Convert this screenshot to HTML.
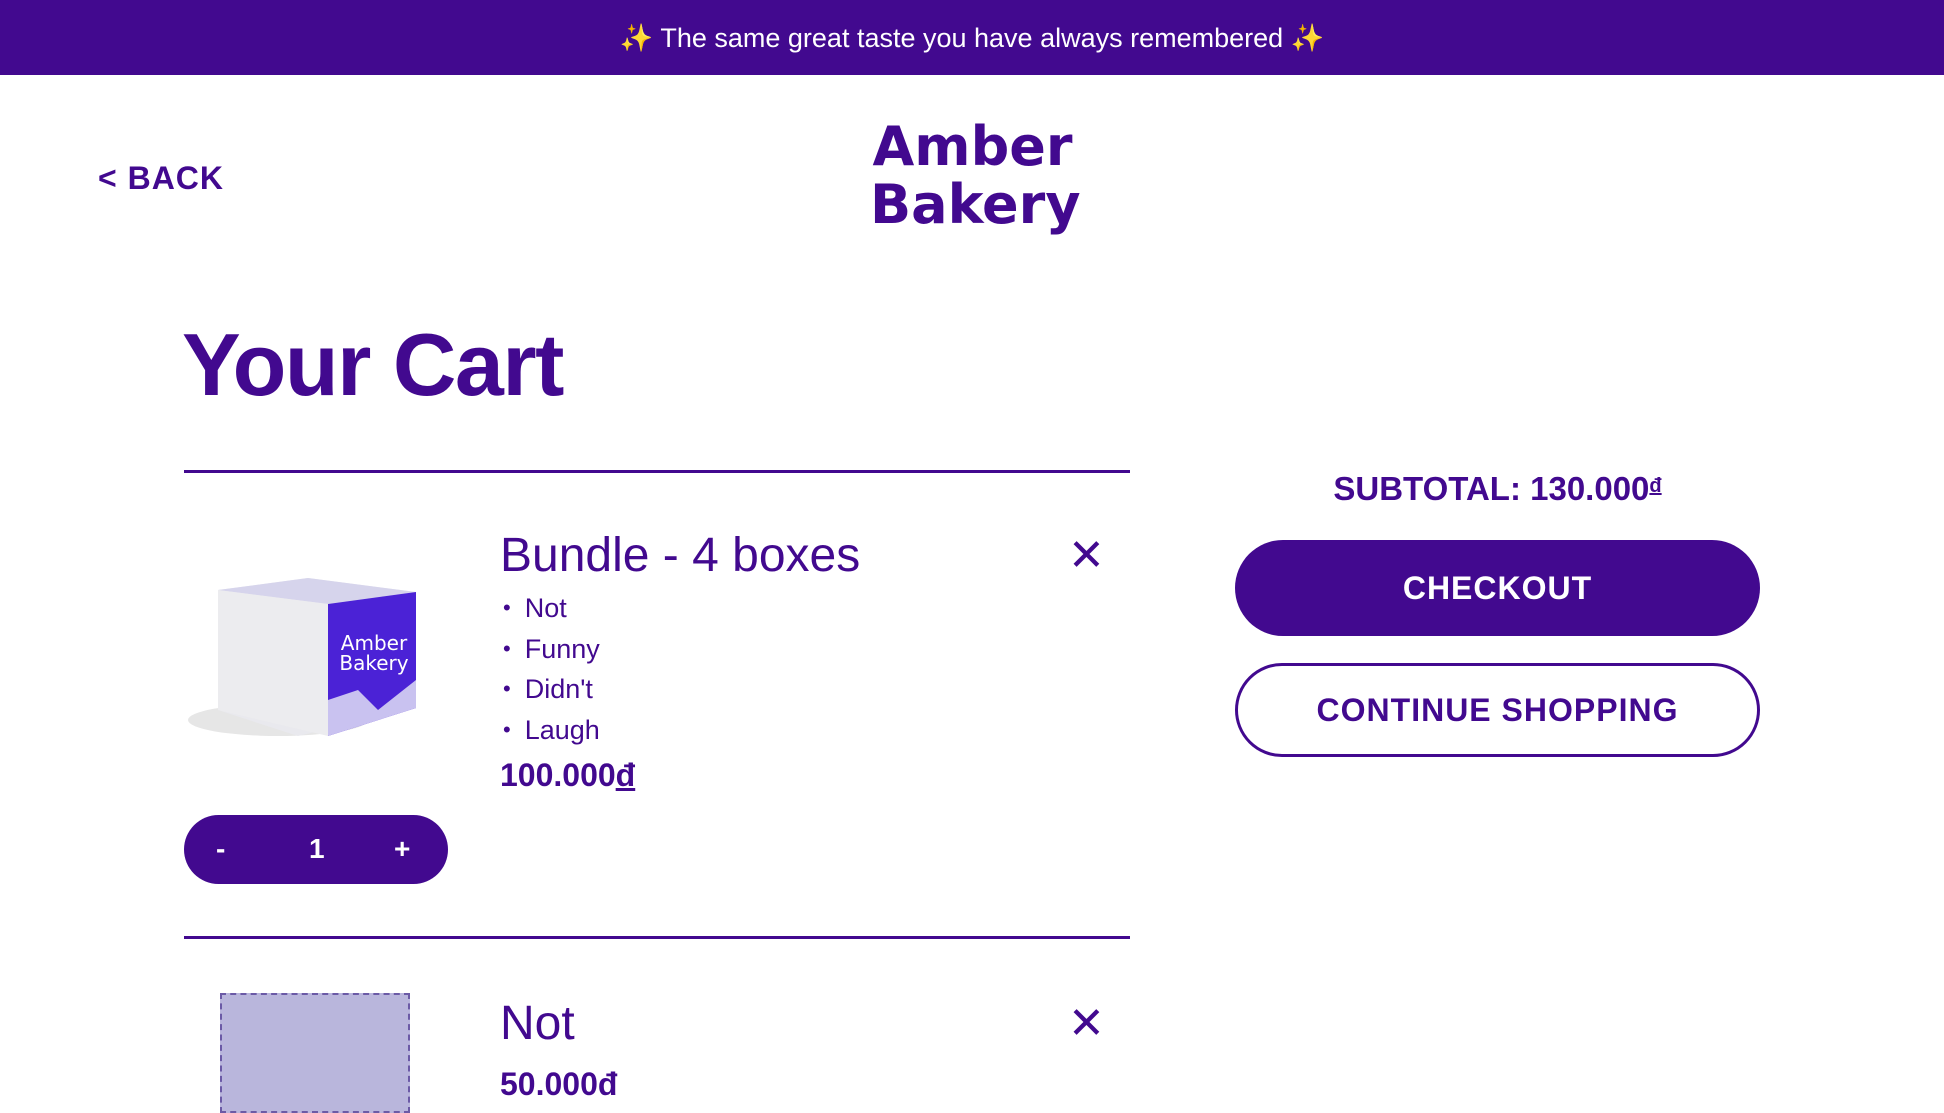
<!DOCTYPE html>
<html><head><meta charset="utf-8"><style>
*{margin:0;padding:0;box-sizing:border-box}
body{width:1944px;height:1080px;overflow:hidden;background:#fff;font-family:"Liberation Sans",sans-serif;color:#42098f;position:relative}
.a{position:absolute}
.banner{left:0;top:0;width:1944px;height:75px;background:#42098f;color:#fff;font-size:27px;text-align:center;line-height:77px}
.back{left:98px;top:160px;font-size:32px;font-weight:bold;letter-spacing:1px}
.logo{left:870px;top:118px;width:205px;font-family:"DejaVu Sans",sans-serif;font-weight:bold;font-size:54px;line-height:58px;text-align:center}
h1{position:absolute;left:182px;top:314px;font-size:88px;font-weight:bold;letter-spacing:-1.5px}
.line{left:184px;width:946px;height:3px;background:#42098f}
.title{left:500px;font-size:48px}
.x{font-size:44px;left:1068px}
ul{position:absolute;left:503px;top:588px;list-style:none;font-size:27px;line-height:39.7px}
ul li:before{content:"•";margin-right:14px;font-size:22px;vertical-align:2px}
.price{left:500px;top:757px;font-size:32px;font-weight:bold}
.qty{left:184px;top:815px;width:264px;height:69px;border-radius:35px;background:#42098f;color:#fff;font-weight:bold;font-size:28px}
.qty span{position:absolute;top:18px}
.sub{left:1235px;width:525px;top:470px;text-align:center;font-size:33px;font-weight:bold}
.btn{left:1235px;width:525px;border-radius:48px;text-align:center;font-size:32px;font-weight:bold;letter-spacing:1px}
</style></head><body>
<div class="a banner">✨ The same great taste you have always remembered ✨</div>
<div class="a back">&lt; BACK</div>
<div class="a logo">Amber<br>Bakery</div>
<h1>Your Cart</h1>
<div class="a line" style="top:470px"></div>
<svg class="a" style="left:188px;top:570px" width="232" height="172" viewBox="0 0 232 172">
<ellipse cx="90" cy="150" rx="90" ry="16" fill="#e6e6e6"/>
<polygon points="30,20 120,8 228,22 228,138 110,166 30,140" fill="#e9e9ee"/>
<polygon points="30,20 120,8 228,22 140,34" fill="#d6d4ec"/>
<polygon points="30,20 140,34 140,166 30,140" fill="#ececef"/>
<polygon points="140,34 228,22 228,138 140,166" fill="#4b22d6"/>
<text x="186" y="80" font-family="DejaVu Sans" font-size="20" fill="#fff" text-anchor="middle">Amber</text>
<text x="186" y="100" font-family="DejaVu Sans" font-size="20" fill="#fff" text-anchor="middle">Bakery</text>
<polygon points="140,130 170,120 190,140 228,110 228,138 140,166" fill="#c9c2f0"/>
</svg>
<div class="a title" style="top:528px">Bundle - 4 boxes</div>
<div class="a x" style="top:530px">✕</div>
<ul><li>Not</li><li>Funny</li><li>Didn't</li><li>Laugh</li></ul>
<div class="a price">100.000<u>đ</u></div>
<div class="a qty"><span style="left:32px">-</span><span style="left:125px">1</span><span style="left:210px">+</span></div>
<div class="a line" style="top:936px"></div>
<div class="a" style="left:220px;top:993px;width:190px;height:120px;background:#b9b6dc;border:2px dashed #6b5aa6"></div>
<div class="a title" style="top:996px">Not</div>
<div class="a x" style="top:998px">✕</div>
<div class="a price" style="top:1066px">50.000đ</div>
<div class="a sub">SUBTOTAL: 130.000<span style="font-size:20px;vertical-align:8px"><u>đ</u></span></div>
<div class="a btn" style="top:540px;height:96px;line-height:96px;background:#42098f;color:#fff">CHECKOUT</div>
<div class="a btn" style="top:663px;height:94px;line-height:88px;border:3px solid #42098f">CONTINUE SHOPPING</div>
</body></html>
